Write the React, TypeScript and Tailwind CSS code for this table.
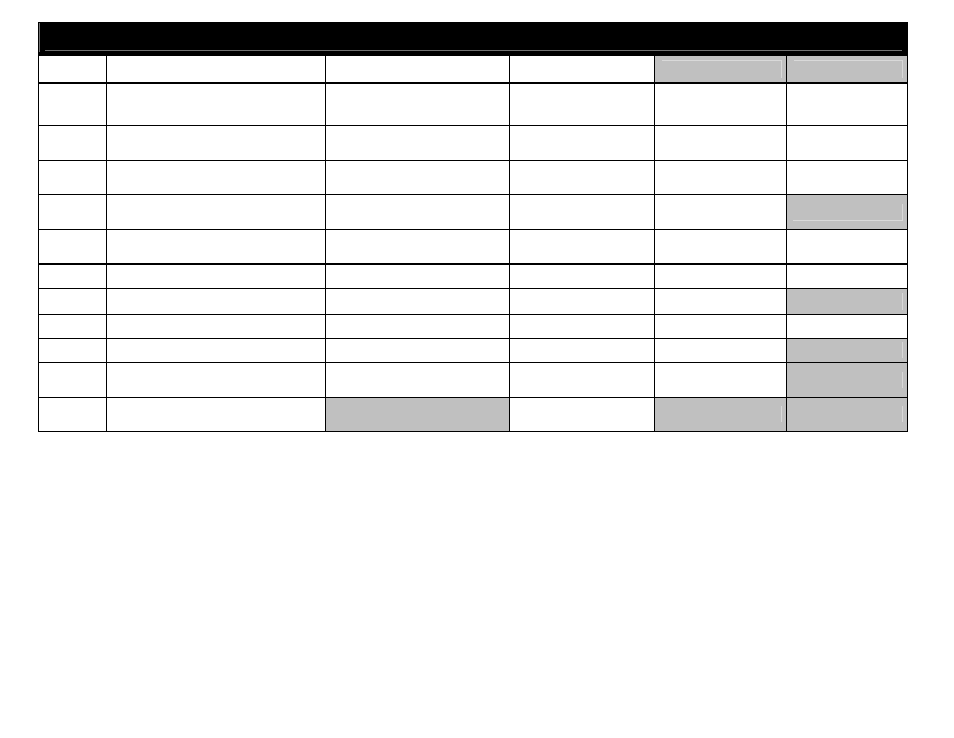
import React from "react";

const widths = ["w-[68px]", "w-[219px]", "w-[184px]", "w-[145px]", "w-[132px]", "w-[122px] border-r"];

type Deco = "topRight" | "bottomRight" | "right" | "none";
type Cell = { gray?: boolean; deco?: React.ReactNode };

const W = (): Cell => ({});

function TopRight({ ml }: { ml: string }) {
  return <div className={`mt-[4px] ${ml} mr-[4px] h-[18px] border-t border-r border-[#d9d9d9]`} />;
}
function BottomRight() {
  return <div className="mt-[9px] ml-[6px] mr-[4px] h-[17px] border-b border-r border-[#d9d9d9]" />;
}
function RightLine({ mt, h }: { mt: string; h: string }) {
  return (
    <div className={`flex justify-end ${mt} mr-[4px]`}>
      <div className={`w-px ${h} bg-[#d9d9d9]`} />
    </div>
  );
}

const rows: { h: string; b: string; cells: Cell[] }[] = [
  {
    h: "h-[28px]",
    b: "border-b-2",
    cells: [W(), W(), W(), W(), { gray: true, deco: <TopRight ml="ml-[7px]" /> }, { gray: true, deco: <TopRight ml="ml-[7px]" /> }],
  },
  { h: "h-[42px]", b: "border-b", cells: [W(), W(), W(), W(), W(), W()] },
  { h: "h-[35px]", b: "border-b", cells: [W(), W(), W(), W(), W(), W()] },
  { h: "h-[34px]", b: "border-b", cells: [W(), W(), W(), W(), W(), W()] },
  { h: "h-[35px]", b: "border-b", cells: [W(), W(), W(), W(), W(), { gray: true, deco: <BottomRight /> }] },
  { h: "h-[35px]", b: "border-b-2", cells: [W(), W(), W(), W(), W(), W()] },
  { h: "h-[24px]", b: "border-b", cells: [W(), W(), W(), W(), W(), W()] },
  { h: "h-[26px]", b: "border-b", cells: [W(), W(), W(), W(), W(), { gray: true, deco: <RightLine mt="mt-[4px]" h="h-[17px]" /> }] },
  { h: "h-[24px]", b: "border-b", cells: [W(), W(), W(), W(), W(), W()] },
  { h: "h-[24px]", b: "border-b", cells: [W(), W(), W(), W(), W(), { gray: true, deco: <RightLine mt="mt-[3px]" h="h-[16px]" /> }] },
  { h: "h-[35px]", b: "border-b", cells: [W(), W(), W(), W(), W(), { gray: true, deco: <RightLine mt="mt-[9px]" h="h-[16px]" /> }] },
  {
    h: "h-[34px]",
    b: "border-b",
    cells: [
      W(),
      W(),
      { gray: true },
      W(),
      { gray: true, deco: <RightLine mt="mt-[8px]" h="h-[16px]" /> },
      { gray: true, deco: <RightLine mt="mt-[8px]" h="h-[16px]" /> },
    ],
  },
];

export default function App() {
  return (
    <div className="min-h-[738px] w-[954px] bg-white pt-[22px] pl-[38px]" style={{ fontFamily: '"Liberation Sans", Arial, sans-serif' }}>
      <div className="w-[870px]">
        <div className="h-[34px] bg-black pt-[1px] pl-[1px]">
          <div className="flex h-[29px] flex-col justify-end border-l border-[#737373]">
            <div className="mb-[1px] ml-[5px] mr-[6px] h-px bg-[#737373]" />
          </div>
        </div>
        {rows.map((row, ri) => (
          <div key={ri} className={`flex ${row.h} ${row.b} border-black`}>
            {row.cells.map((c, ci) => (
              <div
                key={ci}
                className={`${widths[ci]} h-full border-l border-black ${c.gray ? "bg-[#c0c0c0]" : "bg-white"}`}
              >
                {c.deco}
              </div>
            ))}
          </div>
        ))}
      </div>
    </div>
  );
}
